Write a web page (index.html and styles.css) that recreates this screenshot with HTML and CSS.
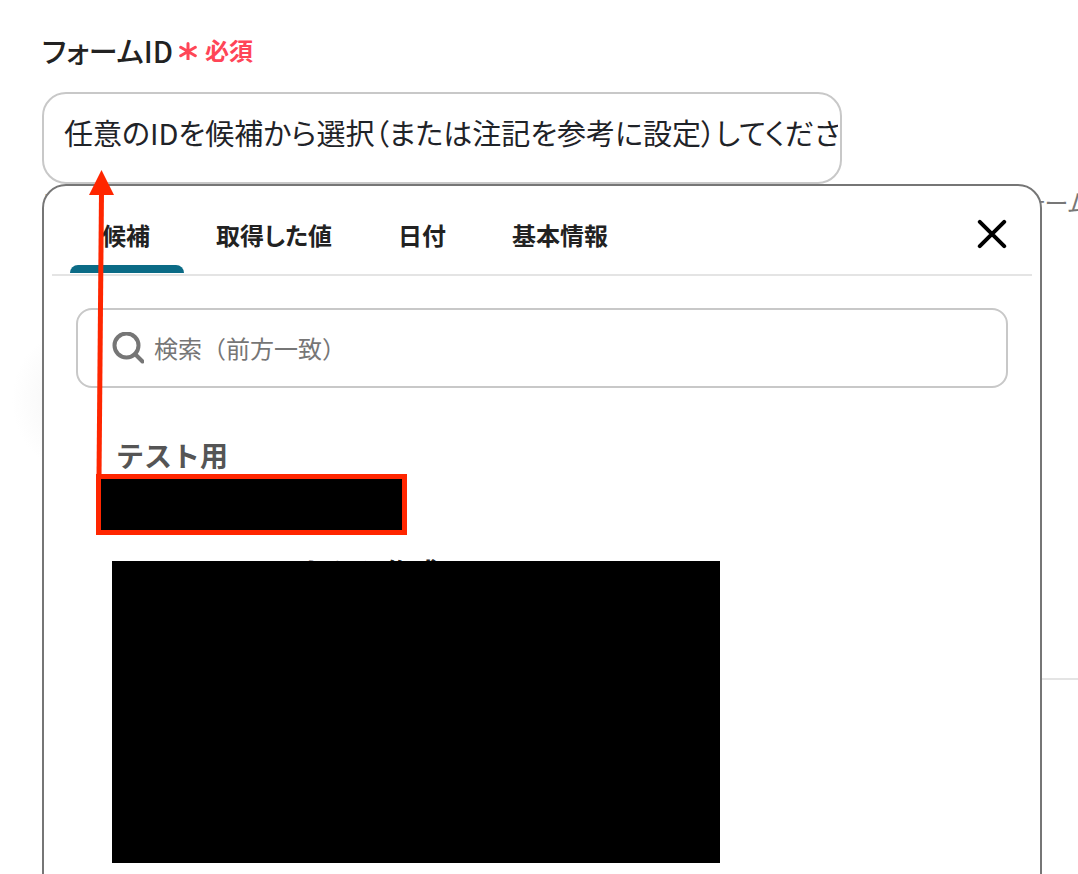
FILE: index.html
```html
<!DOCTYPE html>
<html lang="ja">
<head>
<meta charset="utf-8">
<meta name="viewport" content="width=device-width, initial-scale=1">
<title>フォームID</title>
<link rel="stylesheet" href="styles.css">
</head>
<body>
<main class="page">
  <div class="glow"></div>
  <div class="label-row">
    <label class="label" for="form-id">フォームID</label>
    <span class="required">
      <svg class="asterisk" viewBox="0 0 18 20" aria-hidden="true"><path d="M9 3.5v16M1.7 7.3l14.6 8.4M16.3 7.3L1.7 15.7"/></svg>
      必須
    </span>
  </div>
  <input class="field" id="form-id" type="text" value="任意のIDを候補から選択（または注記を参考に設定）してください">
  <div class="below">
    <p class="hint"><span>※</span><span>フォーム</span></p>
    <hr class="divider">
    <section class="popover">
      <header class="bar">
        <nav class="tabs">
          <button class="tab tab-active" type="button">候補</button>
          <button class="tab" type="button">取得した値</button>
          <button class="tab" type="button">日付</button>
          <button class="tab" type="button">基本情報</button>
        </nav>
        <button class="close" type="button" aria-label="閉じる">
          <svg class="close-icon" viewBox="0 0 30 30" aria-hidden="true"><path d="M2.8 2.8l24.4 24.4M27.2 2.8L2.8 27.2"/></svg>
        </button>
      </header>
      <div class="search">
        <svg class="search-icon" viewBox="0 0 32 32" aria-hidden="true"><circle cx="14.5" cy="13.5" r="12"/><path d="M23 22l7.5 7.5"/></svg>
        <input class="search-input" type="search" aria-label="検索" placeholder="検索（前方一致）">
      </div>
      <div class="results">
        <h2 class="group">テスト用</h2>
        <div class="mask mask-marked"></div>
        <div class="mask-wrap">
          <span class="peek">たから作成</span>
          <div class="mask mask-large"></div>
        </div>
      </div>
      <svg class="arrow" viewBox="0 0 26 308" aria-hidden="true"><path class="shaft" d="M11 308L13.5 22"/><path class="head" d="M13.5 0L26 25H1z"/></svg>
    </section>
  </div>
</main>
</body>
</html>
```
FILE: styles.css
```css
* {
  box-sizing: border-box;
}

body {
  margin: 0;
  background: #fff;
  color: #222;
  font-family: "Noto Sans CJK JP", sans-serif;
  font-feature-settings: "palt";
}

input,
button {
  font: inherit;
  font-feature-settings: inherit;
  color: inherit;
}

.page {
  position: relative;
  min-height: 100vh;
  padding: 30px 36px 0 42px;
  overflow: hidden;
}

.label-row {
  display: flex;
  align-items: center;
  gap: 6px;
  height: 40px;
}

.label {
  font-size: 29px;
  line-height: 40px;
  font-weight: 500;
}

.required {
  display: flex;
  align-items: center;
  gap: 8px;
  color: #ff4557;
  font-size: 24px;
  line-height: 40px;
  font-weight: 700;
}

.asterisk {
  width: 18px;
  height: 20px;
  fill: none;
  stroke: #ff4557;
  stroke-width: 3;
  stroke-linecap: round;
}

.field {
  display: block;
  width: 80%;
  height: 92px;
  margin-top: 22px;
  padding: 0 2px 12px 20px;
  border: 2px solid #c8c8c8;
  border-radius: 24px;
  background: #fff;
  color: #1f2328;
  font-size: 29px;
}

.below {
  position: relative;
}

.hint {
  display: flex;
  justify-content: space-between;
  margin: 0 -48px 0 0;
  color: #777;
  font-size: 24px;
  line-height: 36px;
}

.divider {
  height: 2px;
  margin: 458px -36px 0 0;
  border: 0;
  background: #e4e4e4;
}

.glow {
  position: absolute;
  left: 12px;
  top: 330px;
  width: 120px;
  height: 140px;
  border-radius: 50%;
  background: radial-gradient(closest-side, #f4f4f4, #fff);
}

.popover {
  position: absolute;
  top: 0;
  left: 0;
  width: 100%;
  min-height: 720px;
  padding: 0 8px;
  border: 2px solid #767676;
  border-radius: 24px;
  background: #fff;
}

.bar {
  display: flex;
  justify-content: space-between;
  height: 90px;
  padding: 0 18px;
  border-bottom: 2px solid #e4e4e4;
}

.tabs {
  display: flex;
  gap: 2px;
}

.tab {
  position: relative;
  height: 88px;
  padding: 8px 32px 0;
  border: 0;
  background: none;
  font-size: 24px;
  font-weight: 700;
}

.tab-active::after {
  content: "";
  position: absolute;
  left: 0;
  right: -2px;
  bottom: 1px;
  height: 8px;
  border-radius: 8px 8px 0 0;
  background: #0b6b86;
}

.close {
  display: flex;
  align-items: center;
  height: 96px;
  padding: 0 7px 0 0;
  border: 0;
  background: none;
}

.close-icon {
  width: 30px;
  height: 30px;
  fill: none;
  stroke: #000;
  stroke-width: 4;
  stroke-linecap: round;
}

.search {
  display: flex;
  align-items: center;
  gap: 10px;
  height: 80px;
  margin: 32px 24px 0;
  padding: 0 34px;
  border: 2px solid #c8c8c8;
  border-radius: 16px;
}

.search-icon {
  width: 32px;
  height: 32px;
  fill: none;
  stroke: #767676;
  stroke-width: 4;
  stroke-linecap: round;
}

.search-input {
  flex: 1;
  min-width: 0;
  padding: 0 0 2px;
  border: 0;
  background: none;
  font-size: 24px;
  font-feature-settings: normal;
  outline: 0;
}

.search-input::placeholder {
  color: #767676;
}

.results {
  padding: 48px 0 0 60px;
}

.group {
  margin: 0 0 0 4px;
  color: #555;
  font-size: 28px;
  line-height: 38px;
  font-weight: 700;
  font-feature-settings: normal;
}

.mask {
  background: #000;
}

.mask-marked {
  width: 311px;
  height: 61px;
  margin-left: -16px;
  border: 5px solid #ff2600;
}

.mask-wrap {
  position: relative;
  margin-top: 26px;
}

.mask-large {
  position: relative;
  width: 608px;
  height: 302px;
}

.peek {
  position: absolute;
  top: -5px;
  left: 188px;
  font-size: 28px;
  line-height: 32px;
  font-weight: 700;
  font-feature-settings: normal;
}

.arrow {
  position: absolute;
  top: -16px;
  left: 44px;
  width: 26px;
  height: 308px;
}

.shaft {
  fill: none;
  stroke: #ff2600;
  stroke-width: 5;
}

.head {
  fill: #ff2600;
}
```
